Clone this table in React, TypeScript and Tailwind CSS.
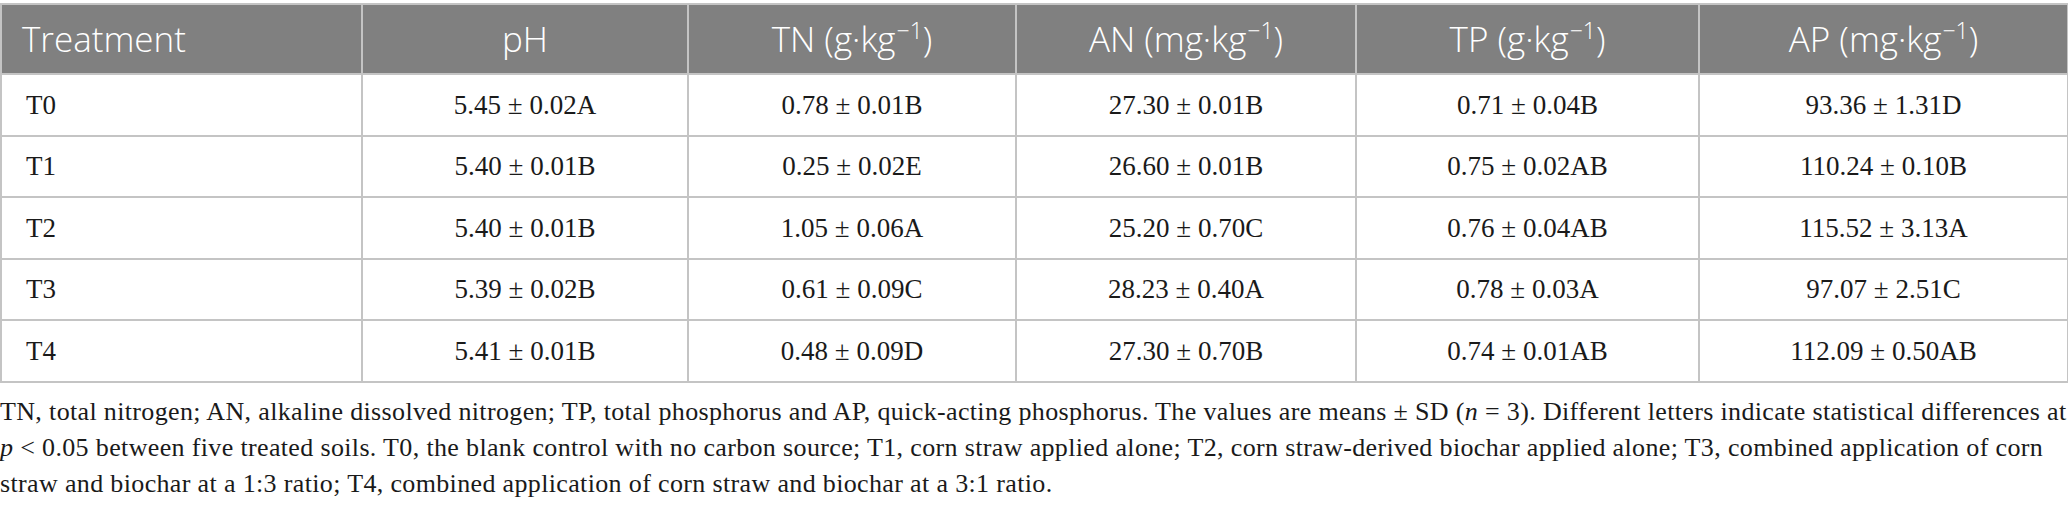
import React from "react";

const rows = [
  ["T0", "5.45 ± 0.02A", "0.78 ± 0.01B", "27.30 ± 0.01B", "0.71 ± 0.04B", "93.36 ± 1.31D"],
  ["T1", "5.40 ± 0.01B", "0.25 ± 0.02E", "26.60 ± 0.01B", "0.75 ± 0.02AB", "110.24 ± 0.10B"],
  ["T2", "5.40 ± 0.01B", "1.05 ± 0.06A", "25.20 ± 0.70C", "0.76 ± 0.04AB", "115.52 ± 3.13A"],
  ["T3", "5.39 ± 0.02B", "0.61 ± 0.09C", "28.23 ± 0.40A", "0.78 ± 0.03A", "97.07 ± 2.51C"],
  ["T4", "5.41 ± 0.01B", "0.48 ± 0.09D", "27.30 ± 0.70B", "0.74 ± 0.01AB", "112.09 ± 0.50AB"],
];

const Unit = ({ label, unit }: { label: string; unit: string }) => (
  <>
    {label} ({unit}
    <sup className="text-[23px] relative -top-[13px] ml-[1px]">−1</sup>)
  </>
);

export default function App() {
  return (
    <div className="w-[2068px] bg-white pt-[3px]">
      <table className="w-[2067px] border-collapse table-fixed">
        <colgroup>
          <col className="w-[361px]" />
          <col className="w-[326px]" />
          <col className="w-[328px]" />
          <col className="w-[340px]" />
          <col className="w-[343px]" />
          <col className="w-[369px]" />
        </colgroup>
        <thead>
          <tr className="h-[70px] bg-[#808080] text-white font-['Open_Sans',sans-serif] text-[35px] font-light">
            <th className="border-2 border-[#c4c4c4] text-left pl-[20px] font-light">Treatment</th>
            <th className="border-2 border-[#c4c4c4] font-light">pH</th>
            <th className="border-2 border-[#c4c4c4] font-light">
              <Unit label="TN" unit="g·kg" />
            </th>
            <th className="border-2 border-[#c4c4c4] font-light">
              <Unit label="AN" unit="mg·kg" />
            </th>
            <th className="border-2 border-[#c4c4c4] font-light">
              <Unit label="TP" unit="g·kg" />
            </th>
            <th className="border-2 border-[#c4c4c4] font-light">
              <Unit label="AP" unit="mg·kg" />
            </th>
          </tr>
        </thead>
        <tbody className="font-['Liberation_Serif',serif] text-[27px] text-[#1a1a1a]">
          {rows.map((r) => (
            <tr key={r[0]} className="h-[61.5px]">
              {r.map((c, i) => (
                <td
                  key={i}
                  className={
                    i === 0
                      ? "border-2 border-[#c4c4c4] text-left pl-[24px]"
                      : "border-2 border-[#c4c4c4] text-center"
                  }
                >
                  {c}
                </td>
              ))}
            </tr>
          ))}
        </tbody>
      </table>
      <div className="mt-[11px] font-['Liberation_Serif',serif] text-[26px] tracking-[0.35px] leading-[36px] text-[#1a1a1a] whitespace-nowrap">
        <div>
          TN, total nitrogen; AN, alkaline dissolved nitrogen; TP, total phosphorus and AP, quick-acting
          phosphorus. The values are means ± SD (<i>n</i> = 3). Different letters indicate statistical
          differences at
        </div>
        <div>
          <i>p</i> &lt; 0.05 between five treated soils. T0, the blank control with no carbon source; T1,
          corn straw applied alone; T2, corn straw-derived biochar applied alone; T3, combined application
          of corn
        </div>
        <div>straw and biochar at a 1:3 ratio; T4, combined application of corn straw and biochar at a 3:1 ratio.</div>
      </div>
    </div>
  );
}
